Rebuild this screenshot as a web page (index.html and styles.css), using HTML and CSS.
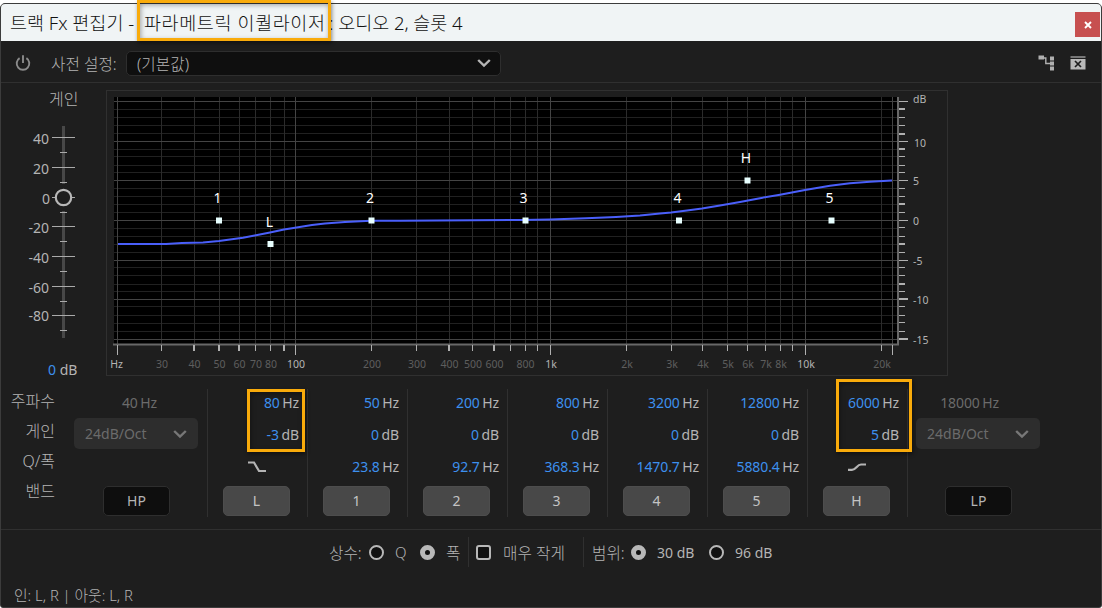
FILE: index.html
```html
<!DOCTYPE html>
<html lang="ko">
<head>
<meta charset="utf-8">
<title>트랙 Fx 편집기</title>
<link rel="stylesheet" href="styles.css">
</head>
<body>
<div class="window">
  <header class="titlebar">
    <h1 class="title"><span class="t-app">트랙 Fx 편집기 -</span><span class="t-effect">파라메트릭 이퀄라이저</span><span class="t-track">: 오디오 2, 슬롯 4</span></h1>
    <button class="close" aria-label="닫기"><svg width="8" height="8" viewBox="0 0 8 8"><path d="M1 1L7 7M7 1L1 7" stroke="#fff" stroke-width="1.9"/></svg></button>
  </header>

  <div class="toolbar">
    <svg class="power" width="16" height="18" viewBox="0 0 16 18" fill="none" stroke="#8b8b8b" stroke-width="1.9"><path d="M4.600 4.100A6.300 6.300 0 1 0 11.400 4.100M8 1.200V9"/></svg>
    <span class="preset-label">사전 설정:</span>
    <div class="preset"><span>(기본값)</span><svg width="14" height="10" viewBox="0 0 14 10" fill="none" stroke="#b4b4b4" stroke-width="2.4"><path d="M1.200 2L7 7.600L12.800 2"/></svg></div>
    <div class="tools">
      <svg width="17" height="17" viewBox="0 0 17 17"><path d="M0.500 0.500H6V4.500H0.500ZM12 1.500H16V5.500H12ZM12 6.500H16V10.500H12ZM12 11.500H16V15.500H12Z" fill="#b0b0b0"/><path d="M6 3H7.800V8.500H12" fill="none" stroke="#b0b0b0" stroke-width="1.400"/></svg>
      <svg width="16" height="14" viewBox="0 0 16 14"><path d="M0.500 0H15.500V2H0.500Z" fill="#777"/><path d="M0.500 3H15.500V13.500H0.500Z" fill="#b8b8b8"/><path d="M5 5L11 11M11 5L5 11" stroke="#1e1e1e" stroke-width="1.700"/></svg>
    </div>
  </div>

  <main class="main">
    <section class="gain">
      <h2 class="gain-title">게인</h2>
      <svg class="gain-scale" width="90" height="240" viewBox="0 0 90 240">
        <path d="M63.500 6V64M63.500 91V218" stroke="#484848" stroke-width="3"/>
        <path d="M52 17.500H75M52 47.500H75M52 77.500H56M72 77.500H75M52 106.500H75M52 136.500H75M52 166.500H75M52 195.500H75M60 32.500H67M60 62.500H67M60 92.500H67M60 121.500H67M60 151.500H67M60 181.500H67M60 210.500H67" stroke="#aaa"/>
        <circle cx="63.500" cy="77.500" r="7.700" fill="#1e1e1e" stroke="#b8b8b8" stroke-width="2.200"/>
        <g class="scale-text">
          <text x="49" y="23.500">40</text><text x="49" y="53.500">20</text><text x="50" y="83.500">0</text>
          <text x="49" y="112.500">-20</text><text x="49" y="142.500">-40</text><text x="49" y="172.500">-60</text><text x="49" y="200.500">-80</text>
        </g>
      </svg>
      <p class="gain-value"><b>0</b> dB</p>
    </section>

    <section class="graph">
      <svg width="840" height="284" viewBox="107 91 840 284">
        <rect x="114" y="97" width="784" height="247" fill="#000"/>
        <path class="grid-minor" d="M114 109.500H898M114 117.500H898M114 125.500H898M114 133.500H898M114 149.500H898M114 156.500H898M114 165.500H898M114 172.500H898M114 188.500H898M114 196.500H898M114 204.500H898M114 212.500H898M114 228.500H898M114 236.500H898M114 244.500H898M114 252.500H898M114 267.500H898M114 275.500H898M114 284.500H898M114 291.500H898M114 306.500H898M114 315.500H898M114 323.500H898M114 331.500H898"/>
        <path class="grid-freq" d="M161.500 97V344M194.500 97V344M219.500 97V344M239.500 97V344M255.500 97V344M270.500 97V344M284.500 97V344M371.500 97V344M416.500 97V344M449.500 97V344M472.500 97V344M494.500 97V344M510.500 97V344M525.500 97V344M537.500 97V344M626.500 97V344M671.500 97V344M702.500 97V344M727.500 97V344M747.500 97V344M765.500 97V344M780.500 97V344M792.500 97V344M881.500 97V344"/>
        <path class="grid-major" d="M117.500 97V344M295.500 97V344M550.500 97V344M805.500 97V344M892.500 97V344M114 101.500H898M114 141.500H898M114 180.500H898M114 220.500H898M114 260.500H898M114 299.500H898M114 339.500H898"/>
        <path class="axis-line" d="M113 344.500H899M898 97V345"/>
        <path class="tick" d="M899 101.500H908M899 141.500H908M899 180.500H908M899 220.500H908M899 260.500H908M117.500 345V355M295.500 345V355M550.500 345V355M805.500 345V355M892.500 345V355"/>
        <path class="tick" d="M899 117.500H905M899 125.500H905M899 156.500H905M899 165.500H905M899 172.500H905M899 188.500H905M899 196.500H905M899 212.500H905M899 227.500H905M899 236.500H905M899 252.500H905M899 267.500H905M899 275.500H905M899 291.500H905M899 306.500H905M899 315.500H905M899 322.500H905M899 331.500H905"/>
        <path class="tick thick" d="M899 109H905M899 134H905M899 149H905M899 204H905M899 244H905M899 284H905M899 299H908M899 339H908"/>
        <path class="tick" d="M161.500 345V351M255.500 345V351M270.500 345V351M371.500 345V351M416.500 345V351M472.500 345V351M510.500 345V351M525.500 345V351M537.500 345V351M626.500 345V351M671.500 345V351M702.500 345V351M727.500 345V351M747.500 345V351M765.500 345V351M780.500 345V351M792.500 345V351M881.500 345V351"/>
        <path class="tick thick" d="M194 345V351M219 345V351M239 345V351M284 345V351M449 345V351M494 345V351"/>
        <path class="curve" d="M118 244H166L182 243L203 242.600L219 241L230 239.500L243 237.700L256 235.300L270 232.500L284 229.500L295 227.700L312 225L325 223.500L345 222L371 220.700H400L520 220L550 219.400L586 218.300L616 217L640 215.500L660 213.500L671 212.600L687 210.500L702 208.600L720 205.500L740 202L760 198.200L780 194.700L805 190L830 185.700L850 183.300L870 181.700L892 180.500"/>
        <path class="node" d="M216 217.500h6v6h-6zM267.500 241h6v6h-6zM368.500 217.500h6v6h-6zM522.500 217.500h6v6h-6zM676 217.500h6v6h-6zM744.500 177.500h6v6h-6zM828.500 217.500h6v6h-6z"/>
        <g class="node-text">
          <text x="217.500" y="203">1</text><text x="269.500" y="227">L</text><text x="370" y="203">2</text><text x="523.500" y="203">3</text><text x="677.500" y="203">4</text><text x="746" y="163">H</text><text x="829.500" y="203">5</text>
        </g>
        <g class="axis-text dim">
          <text x="162" y="368">30</text><text x="194.500" y="368">40</text><text x="219.500" y="368">50</text><text x="239.500" y="368">60</text><text x="256" y="368">70</text><text x="271" y="368">80</text><text x="372" y="368">200</text><text x="417" y="368">300</text><text x="449.500" y="368">400</text><text x="473" y="368">500</text><text x="494.500" y="368">600</text><text x="525.500" y="368">800</text><text x="627" y="368">2k</text><text x="672" y="368">3k</text><text x="703" y="368">4k</text><text x="728" y="368">5k</text><text x="748" y="368">6k</text><text x="766" y="368">7k</text><text x="781" y="368">8k</text><text x="882" y="368">20k</text>
        </g>
        <g class="axis-text"><text x="116.500" y="368">Hz</text><text x="296" y="368">100</text><text x="551" y="368">1k</text><text x="806" y="368">10k</text></g>
        <g class="axis-text db"><text x="913" y="103">dB</text><text x="914" y="147">10</text><text x="913" y="185">5</text><text x="913" y="225">0</text><text x="913" y="265">-5</text><text x="913" y="304">-10</text><text x="913" y="344">-15</text></g>
      </svg>
    </section>
  </main>

  <section class="bands">
    <div class="row-names"><span>주파수</span><span>게인</span><span>Q/폭</span><span>밴드</span></div>
    <div class="pass hp"><p>40 Hz</p><div class="slope"><span>24dB/Oct</span><svg width="14" height="10" viewBox="0 0 14 10" fill="none" stroke="#777" stroke-width="2.400"><path d="M1.200 2L7 7.600L12.800 2"/></svg></div><button class="btn off">HP</button></div>
    <div class="band"><p><b>80</b> Hz</p><p><b>-3</b> dB</p><p class="shelf"><svg width="20" height="12" viewBox="0 0 20 12" fill="none" stroke="#b4b4b4" stroke-width="2.200"><path d="M1 1.500H7L12 10H19"/></svg></p><button class="btn">L</button></div>
    <div class="band"><p><b>50</b> Hz</p><p><b>0</b> dB</p><p><b>23.8</b> Hz</p><button class="btn">1</button></div>
    <div class="band"><p><b>200</b> Hz</p><p><b>0</b> dB</p><p><b>92.7</b> Hz</p><button class="btn">2</button></div>
    <div class="band"><p><b>800</b> Hz</p><p><b>0</b> dB</p><p><b>368.3</b> Hz</p><button class="btn">3</button></div>
    <div class="band"><p><b>3200</b> Hz</p><p><b>0</b> dB</p><p><b>1470.7</b> Hz</p><button class="btn">4</button></div>
    <div class="band"><p><b>12800</b> Hz</p><p><b>0</b> dB</p><p><b>5880.4</b> Hz</p><button class="btn">5</button></div>
    <div class="band"><p><b>6000</b> Hz</p><p><b>5</b> dB</p><p class="shelf"><svg width="20" height="12" viewBox="0 0 20 12" fill="none" stroke="#b4b4b4" stroke-width="2.200"><path d="M1 8.800H5C9 8.800 10 3.500 14 3.500H19"/></svg></p><button class="btn">H</button></div>
    <div class="pass lp"><p>18000 Hz</p><div class="slope"><span>24dB/Oct</span><svg width="14" height="10" viewBox="0 0 14 10" fill="none" stroke="#777" stroke-width="2.400"><path d="M1.200 2L7 7.600L12.800 2"/></svg></div><button class="btn off">LP</button></div>
  </section>

  <section class="options">
    <div class="group constant"><span>상수:</span><i class="radio"></i><span class="q">Q</span><i class="radio on"></i><span class="w">폭</span></div>
    <div class="group narrow"><i class="check"></i><span>매우 작게</span></div>
    <div class="group range"><span>범위:</span><i class="radio on"></i><span class="r30">30 dB</span><i class="radio"></i><span class="r96">96 dB</span></div>
  </section>

  <footer class="status">인: L, R | 아웃: L, R</footer>
</div>
<div class="mark mark-title"></div>
<div class="mark mark-low"></div>
<div class="mark mark-high"></div>
</body>
</html>
```

FILE: styles.css
```css
* { box-sizing: border-box; }
body { margin: 0; width: 1102px; height: 608px; overflow: hidden; position: relative; background: #fff; font-family: "Noto Sans", "Noto Sans CJK KR", sans-serif; font-size: 14px; color: #b4b4b4; }
h1, h2, p { margin: 0; font-weight: 400; }
b { font-weight: 400; color: #3d90ee; }
button { font: inherit; padding: 0; border: 0; }

.window { margin-top: 3px; height: 605px; display: flex; flex-direction: column; background: #1e1e1e; border: 1px solid #3c3c3c; border-radius: 5px 5px 3px 3px; overflow: hidden; }
.titlebar { height: 37px; flex: none; display: flex; align-items: center; justify-content: space-between; background: #f0f4f5; color: #111; padding: 0 1px 0 9px; }
.title { display: flex; font-size: 18.500px; line-height: 24px; white-space: pre; font-weight: 300; }
.t-app { width: 134px; }
.t-effect { width: 185px; letter-spacing: 0.600px; }
.t-track { letter-spacing: -0.050px; }
.close { width: 25px; height: 25px; margin-top: 4px; display: flex; align-items: center; justify-content: center; background: #c75050; }

.toolbar { height: 42px; flex: none; display: flex; align-items: center; padding: 3px 15px 0 14px; border-bottom: 1px solid #303030; font-size: 15px; }
.power { width: 16px; flex: none; }
.preset-label { width: 95px; flex: none; padding-left: 20px; white-space: nowrap; font-size: 15.700px; font-weight: 300; }
.preset { width: 375px; height: 25px; display: flex; align-items: center; justify-content: space-between; padding: 0 9px 0 10px; background: #0f0f0f; border: 1px solid #2e2e2e; border-radius: 5px; font-size: 15.700px; font-weight: 300; }
.tools { margin-left: auto; display: flex; align-items: center; gap: 15px; }

.main { height: 302px; flex: none; display: flex; }
.gain { width: 105px; flex: none; padding-top: 4px; }
.gain-title { font-size: 16px; line-height: 24px; font-weight: 300; padding-left: 48px; }
.gain-scale { display: block; margin: 9px 0 0 -1px; }
.scale-text { font-size: 14px; text-anchor: end; fill: #b4b4b4; }
.gain-value { line-height: 20px; padding-left: 47px; }
.graph { width: 842px; height: 286px; margin-top: 7px; border: 1px solid #303030; }
.graph svg { display: block; }
.grid-minor, .grid-freq, .grid-major, .axis-line, .tick, .curve { fill: none; }
.grid-minor { stroke: #212121; }
.grid-freq { stroke: #2b2b2b; }
.grid-major { stroke: #444; }
.axis-line { stroke: #686868; stroke-width: 2; }
.tick { stroke: #b0b0b0; }
.thick { stroke-width: 2; }
.curve { stroke: #4a5ffa; stroke-width: 2; }
.node { fill: #e8ffff; }
.node-text { font-size: 14px; fill: #fff; text-anchor: middle; }
.axis-text { font-size: 10.500px; fill: #b4b4b4; text-anchor: middle; }
.axis-text.dim { fill: #5e5e5e; }
.axis-text.db { text-anchor: start; }

.bands { height: 145px; flex: none; display: flex; padding-top: 4px; border-bottom: 1px solid #303030; }
.row-names { width: 54px; display: flex; flex-direction: column; align-items: flex-end; font-size: 16px; line-height: 30px; margin-top: -3px; font-weight: 300; white-space: nowrap; }
.band { width: 100px; height: 128px; border-left: 1px solid #303030; }
.band p { height: 32.200px; line-height: 27px; padding-right: 8px; text-align: right; letter-spacing: -0.100px; word-spacing: -1px; white-space: nowrap; }
.band .shelf { padding: 8px 0 0 39px; text-align: left; line-height: 0; }
.btn { display: block; width: 67px; height: 30px; margin-left: 15px; border: 1px solid #4d4d4d; background: #484848; color: #c4c4c4; border-radius: 5px; line-height: 28px; text-align: center; }
.btn.off { background: #0e0e0e; border-color: #2e2e2e; }
.pass { color: #6b6b6b; }
.pass p { height: 29px; line-height: 27px; text-align: right; letter-spacing: -0.100px; word-spacing: -1px; }
.hp { width: 152px; padding-left: 19px; }
.hp p { padding-right: 50px; }
.lp { width: 146px; padding-left: 8px; border-left: 1px solid #303030; height: 128px; }
.lp p { padding-right: 54px; }
.slope { width: 124px; height: 31px; display: flex; align-items: center; justify-content: space-between; padding: 0 11px; background: #2d2d2d; border-radius: 5px; }
.pass .btn { margin: 37px 0 0 29px; color: #b4b4b4; }

.options { height: 44px; flex: none; display: flex; align-items: center; padding-left: 328px; font-size: 14px; }
.group { display: flex; align-items: center; height: 30px; white-space: nowrap; font-size: 15.700px; font-weight: 300; }
.radio, .check { width: 15px; height: 15px; flex: none; border: 2.500px solid #b8b8b8; border-radius: 50%; background: #101010; }
.radio.on { border-width: 5px; }
.check { border-radius: 3px; }
.constant { width: 140px; border-right: 1px solid #303030; }
.constant span:first-child { width: 40px; }
.q { width: 36px; padding-left: 11px; font-size: 15px; }
.w { padding-left: 11px; }
.narrow { width: 115px; padding-left: 7px; border-right: 1px solid #303030; }
.narrow span { padding-left: 12px; }
.range { padding-left: 8px; }
.range span:first-child { width: 39px; }
.r30, .r96 { padding-left: 11px; font-size: 14px; font-weight: 400; }
.r30 { width: 63px; }
.status { padding: 9px 0 0 13px; line-height: 24px; font-size: 14.800px; font-weight: 300; }

.mark { position: absolute; border: 3px solid #f9ab0b; box-shadow: 1px 2px 4px rgba(0, 0, 0, .45), inset 1px 2px 5px rgba(0, 0, 0, .35); }
.mark-title { left: 137px; top: 0; width: 194px; height: 41px; }
.mark-low { left: 247px; top: 389px; width: 58px; height: 63px; }
.mark-high { left: 836px; top: 379px; width: 76px; height: 73px; }
```
